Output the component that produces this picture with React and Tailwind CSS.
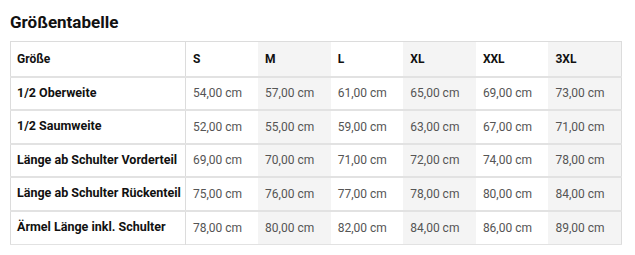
import React from 'react';

const sizes = ['S', 'M', 'L', 'XL', 'XXL', '3XL'];

const rows = [
  { label: '1/2 Oberweite', values: ['54,00', '57,00', '61,00', '65,00', '69,00', '73,00'] },
  { label: '1/2 Saumweite', values: ['52,00', '55,00', '59,00', '63,00', '67,00', '71,00'] },
  { label: 'Länge ab Schulter Vorderteil', values: ['69,00', '70,00', '71,00', '72,00', '74,00', '78,00'] },
  { label: 'Länge ab Schulter Rückenteil', values: ['75,00', '76,00', '77,00', '78,00', '80,00', '84,00'] },
  { label: 'Ärmel Länge inkl. Schulter', values: ['78,00', '80,00', '82,00', '84,00', '86,00', '89,00'] },
];

const colBg = (i) => (i % 2 === 1 ? 'bg-[#f4f4f4]' : 'bg-white');

const App = () => {
  return (
    <div className="px-[10px] pt-[11px] font-['Roboto',sans-serif] bg-white w-[635px] h-[255px]">
      <h2 className="text-[17px] font-bold text-[#111] leading-[22px] mb-[8px]">Größentabelle</h2>

      <table className="w-[611px] border-collapse border border-[#dcdcdc] table-fixed">
        <colgroup>
          <col className="w-[175px]" />
          {sizes.map((s) => (
            <col key={s} className="w-[72.6px]" />
          ))}
        </colgroup>
        <thead>
          <tr className="h-[35px] border-b-2 border-[#e2e2e2]">
            <th className="text-left pl-[6px] text-[12px] font-bold text-[#111] border-r border-[#dcdcdc] bg-white shadow-[4px_0_5px_-3px_rgba(0,0,0,0.15)] relative">
              Größe
            </th>
            {sizes.map((s, i) => (
              <th key={s} className={`text-left pl-[7px] text-[12px] font-bold text-[#111] ${colBg(i)}`}>
                {s}
              </th>
            ))}
          </tr>
        </thead>
        <tbody>
          {rows.map((row) => (
            <tr key={row.label} className="h-[33.5px] border-b-2 border-[#e2e2e2] last:border-b">
              <td className="pl-[6px] text-[12.5px] font-bold text-[#111] whitespace-nowrap border-r border-[#dcdcdc] bg-white shadow-[4px_0_5px_-3px_rgba(0,0,0,0.15)] relative">
                {row.label}
              </td>
              {row.values.map((v, i) => (
                <td key={i} className={`pl-[7px] text-[12px] text-[#555] whitespace-nowrap ${colBg(i)}`}>
                  {v} cm
                </td>
              ))}
            </tr>
          ))}
        </tbody>
      </table>
    </div>
  );
};

export default App;
